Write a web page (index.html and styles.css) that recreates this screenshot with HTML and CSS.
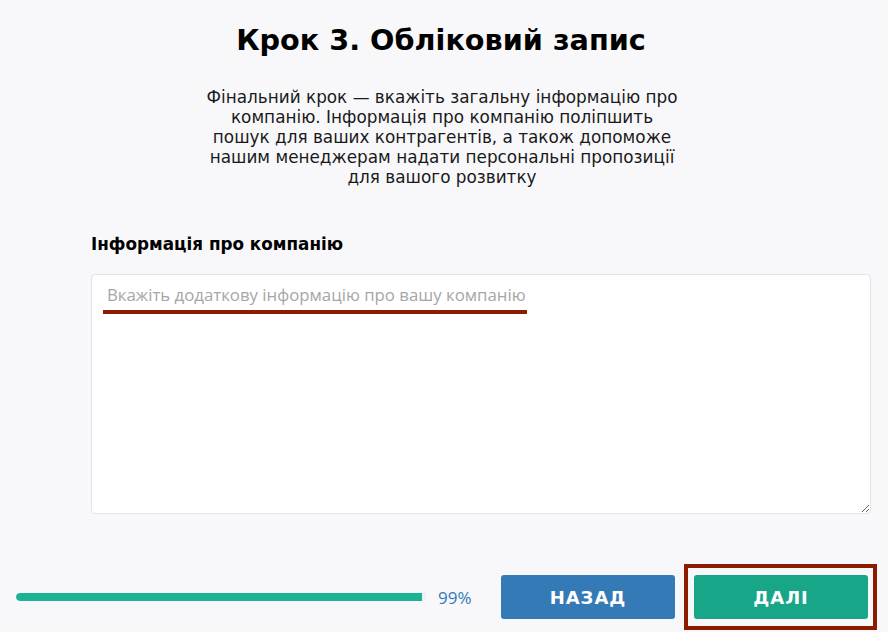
FILE: index.html
```html
<!DOCTYPE html>
<html lang="uk">
<head>
<meta charset="utf-8">
<title>Крок 3. Обліковий запис</title>
<link rel="stylesheet" href="styles.css">
</head>
<body>
<div class="page">
  <main class="content">
    <h1 class="title">Крок 3. Обліковий запис</h1>
    <p class="lead">Фінальний крок — вкажіть загальну інформацію про компанію. Інформація про компанію поліпшить пошук для ваших контрагентів, а також допоможе нашим менеджерам надати персональні пропозиції для вашого розвитку</p>
    <section class="field">
      <label class="field-label" for="info">Інформація про компанію</label>
      <div class="textarea-wrap">
        <textarea id="info" class="textarea" placeholder="Вкажіть додаткову інформацію про вашу компанію"></textarea>
        <span class="mark-underline"></span>
      </div>
    </section>
  </main>
  <footer class="footer">
    <div class="progress"><div class="progress-fill" style="width:99%"></div></div>
    <span class="percent">99%</span>
    <div class="actions">
      <button class="btn btn-back" type="button">НАЗАД</button>
      <button class="btn btn-next" type="button">ДАЛІ</button>
    </div>
  </footer>
</div>
</body>
</html>
```
FILE: styles.css
```css
* { box-sizing: border-box; }
html, body { margin: 0; padding: 0; }
body {
  background: #f8f8fa;
  font-family: "DejaVu Sans", sans-serif;
  color: #111;
  width: 888px;
  height: 632px;
  overflow: hidden;
}
.page {
  display: flex;
  flex-direction: column;
  height: 632px;
}
.content {
  padding: 23px 17px 0 91px;
  display: flex;
  flex-direction: column;
}
.title {
  margin: 0;
  font-size: 28.7px;
  line-height: 34px;
  font-weight: bold;
  text-align: center;
  color: #000;
  padding-right: 80px;
}
.lead {
  margin: 30px auto 0;
  width: 482px;
  font-size: 16.85px;
  line-height: 20px;
  text-align: center;
  color: #1a1a1a;
  position: relative;
  left: -39px;
}
.field {
  margin-top: 47px;
  display: flex;
  flex-direction: column;
}
.field-label {
  font-size: 16.8px;
  line-height: 20px;
  font-weight: bold;
  color: #000;
}
.textarea-wrap {
  position: relative;
  margin-top: 20px;
}
.textarea {
  display: block;
  width: 780px;
  height: 240px;
  border: 1px solid #e3e3e6;
  border-radius: 4px;
  background: #fff;
  padding: 9px 15px;
  font-family: "Open Sans", sans-serif;
  font-size: 16.8px;
  line-height: 22px;
  color: #333;
  resize: vertical;
  outline: none;
}
.textarea::placeholder { color: #a6a6a6; }
.mark-underline {
  position: absolute;
  left: 12px;
  top: 36px;
  width: 424px;
  height: 4px;
  background: #8b1c00;
}
.footer {
  margin-top: auto;
  display: flex;
  align-items: center;
  padding: 0 20px 13px 16px;
}
.progress {
  flex: 1;
  height: 8px;
  border-radius: 4px 0 0 4px;
  background: #eef0f2;
  overflow: hidden;
}
.progress-fill {
  height: 100%;
  background: #1ab394;
  border-radius: 4px 0 0 4px;
}
.percent {
  margin-left: 12px;
  width: 34px;
  font-family: "Open Sans", sans-serif;
  font-size: 17px;
  color: #337ab7;
}
.actions {
  display: flex;
  gap: 19px;
  margin-left: 29px;
}
.btn {
  width: 174px;
  height: 44px;
  border: none;
  border-radius: 3px;
  color: #fff;
  font-family: "DejaVu Sans", sans-serif;
  font-weight: bold;
  font-size: 18px;
  letter-spacing: 1px;
  cursor: pointer;
}
.btn-back { background: #337ab7; }
.btn-next {
  position: relative;
  background: #18a689;
}
.btn-next::after {
  content: "";
  position: absolute;
  top: -11.5px;
  bottom: -11px;
  left: -10.5px;
  right: -9px;
  border: 4.5px solid #8b1c00;
  pointer-events: none;
}
```
